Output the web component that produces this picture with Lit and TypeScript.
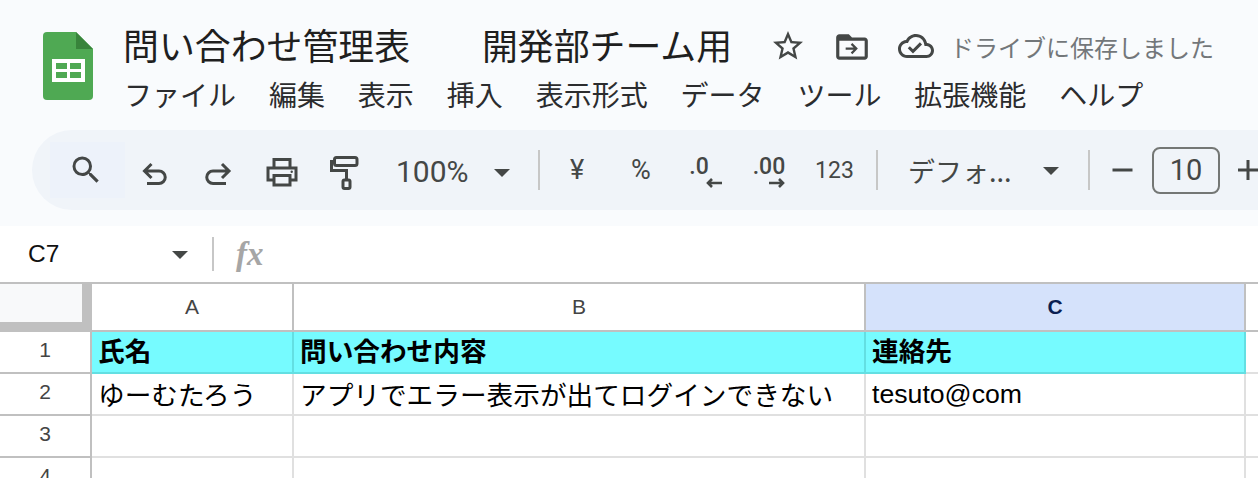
import {css, html, LitElement, svg} from 'lit';
import {customElement} from 'lit/decorators.js';

const MENUS = ['ファイル', '編集', '表示', '挿入', '表示形式', 'データ', 'ツール', '拡張機能', 'ヘルプ'];

const caret = html`<svg class="caret" width="16" height="8" viewBox="0 0 16 8"><path d="M0 0h16L8 8z" fill="#444746"></path></svg>`;

const icon = (d: string, size = 36) => html`<svg width=${size} height=${size} viewBox="0 0 24 24"><path d=${d} fill="#444746"></path></svg>`;

const stroked = (body: unknown) => html`<svg width="36" height="36" viewBox="0 0 36 36" fill="none" stroke="#444746" stroke-width="3">${body}</svg>`;

@customElement('app-root')
export class AppRoot extends LitElement {
  static override styles = css`
      :host {
          display: block;
          width: 1258px;
          height: 478px;
          overflow: hidden;
          background: #fff;
          font-family: "Noto Sans CJK JP", sans-serif;
      }

      svg {
          overflow: visible;
      }

      .header {
          height: 226px;
          box-sizing: border-box;
          background: #f9fbfd;
          overflow: hidden;
      }

      .top {
          display: flex;
          height: 130px;
      }

      .logo {
          margin: 32px 30px 0 43px;
          flex-shrink: 0;
      }

      .titles {
          display: flex;
          flex-direction: column;
      }

      .title-row {
          display: flex;
          align-items: center;
          height: 46px;
          margin-top: 23px;
          white-space: pre;
      }

      .title {
          box-sizing: border-box;
          padding-bottom: 4px;
          font-size: 35.9px;
          line-height: 50px;
          color: #1f1f1f;
          width: 647px;
          flex-shrink: 0;
      }

      .title-row svg {
          flex-shrink: 0;
      }

      .folder {
          display: flex;
          margin: 2px 27px 0 27px;
      }

      .saved {
          margin: 1px 0 0 16px;
          font-size: 24px;
          color: #73777a;
      }

      .menu {
          display: flex;
          gap: 32.9px;
          margin: 0 0 0 1px;
          font-size: 28px;
          line-height: 50px;
          color: #2b2c2e;
          white-space: nowrap;
      }

      .toolbar {
          display: flex;
          align-items: center;
          height: 80px;
          margin-left: 32px;
          padding-left: 18px;
          border-radius: 40px 0 0 40px;
          background: #f0f4f9;
          color: #444746;
          white-space: nowrap;
      }

      .toolbar .caret {
          margin-top: 2px;
      }

      .slot {
          display: flex;
          align-items: center;
          justify-content: center;
          flex-shrink: 0;
          height: 56px;
      }

      .search {
          width: 75px;
          box-sizing: border-box;
          padding-right: 3px;
          background: #edf2fa;
      }

      .w62 { width: 62px; }
      .w64 { width: 64px; }

      .raise {
          padding-top: 6px;
          box-sizing: border-box;
      }

      .zoom {
          width: 147px;
          box-sizing: border-box;
          padding: 3px 0 0 21px;
          justify-content: flex-start;
          font-family: Roboto, sans-serif;
          font-size: 30px;
      }

      .zoom .caret {
          margin-left: 25px;
      }

      .sym {
          font-family: Roboto, sans-serif;
          font-size: 27px;
      }

      .num {
          width: 66px;
          box-sizing: border-box;
          padding-left: 1px;
          font-family: Roboto, sans-serif;
          font-size: 23px;
      }

      .dec {
          flex-direction: column;
          align-items: center;
          box-sizing: border-box;
          padding-top: 5px;
          font-family: Roboto, sans-serif;
          font-size: 23px;
          font-weight: 500;
          line-height: 20px;
      }

      .dec span {
          margin-right: 12px;
      }

      .dec svg {
          display: block;
          margin: 1px 0 0 18px;
      }

      .dec.more span {
          margin-right: 0;
      }

      .dec.more svg {
          margin-left: 16px;
      }

      .sep {
          width: 2px;
          height: 40px;
          background: #c7c7c7;
          flex-shrink: 0;
      }

      .sep.a { margin: 0 5px 0 16px; }
      .sep.b { margin: 0 0 0 9px; }

      .font {
          width: 210px;
          box-sizing: border-box;
          padding-left: 30px;
          justify-content: flex-start;
          font-size: 27px;
      }

      .font span {
          width: 135px;
      }

      .minus {
          width: 62px;
      }

      .size {
          display: flex;
          align-items: center;
          justify-content: center;
          width: 68px;
          height: 47px;
          box-sizing: border-box;
          flex-shrink: 0;
          border: 2px solid #747775;
          border-radius: 8px;
          font-family: Roboto, sans-serif;
          font-size: 29px;
      }

      .plus {
          width: 54px;
      }

      .formula {
          display: flex;
          align-items: center;
          height: 56px;
          background: #fff;
      }

      .ref {
          width: 144px;
          margin-left: 28px;
          font-family: "Liberation Sans", sans-serif;
          font-size: 24.5px;
          color: #111;
      }

      .formula .caret {
          margin-top: 1px;
      }

      .formula .sep {
          height: 34px;
          margin: 0 22px 0 24px;
      }

      .fx {
          font-family: "Liberation Serif", serif;
          font-style: italic;
          font-weight: 700;
          font-size: 33px;
          color: #a6a6a6;
      }

      .grid {
          display: grid;
          grid-template-columns: 92px 202px 572px 380px 12px;
          grid-template-rows: 48px repeat(4, 42px);
          border-top: 2px solid #c0c0c0;
          font-family: "Liberation Sans", "Noto Sans CJK JP", sans-serif;
      }

      .cell {
          display: flex;
          align-items: center;
          box-sizing: border-box;
          padding: 0 0 2px 6px;
          border-right: 2px solid #e0e0e0;
          border-bottom: 2px solid #e0e0e0;
          font-size: 26.67px;
          color: #000;
          white-space: nowrap;
          overflow: hidden;
      }

      .cell.email {
          padding-bottom: 0;
      }

      .corner {
          box-sizing: border-box;
          background: #f8f9fa;
          border-right: 10px solid #c0c0c0;
          border-bottom: 10px solid #c0c0c0;
      }

      .col, .row {
          justify-content: center;
          font-size: 21px;
          color: #444;
          border-color: #c0c0c0;
      }

      .col {
          padding: 0;
          background: #fff;
      }

      .col.sel {
          background: #d5e2fb;
          font-weight: 700;
          color: #0b1f52;
      }

      .tail {
          border-right: 0;
          border-bottom-color: #c0c0c0;
      }

      .row {
          padding: 0 0 4px;
          background: #fff;
          border-bottom-color: #c0c0c0;
      }

      .head {
          padding-bottom: 5px;
          background: #76fbff;
          font-weight: 700;
          border-color: #63dfe2;
      }

      .tail.plain {
          border-bottom-color: #e0e0e0;
      }
  `;

  private _logo() {
    return html`<svg class="logo" width="50" height="68" viewBox="0 0 50 68">
      <path d="M4 0h29l17 17v47a4 4 0 0 1-4 4H4a4 4 0 0 1-4-4V4a4 4 0 0 1 4-4z" fill="#4fa953"></path>
      <path d="M33 0l17 17H33z" fill="#38843b"></path>
      <path d="M9 27h33v23H9z" fill="#fff"></path>
      <path d="M13 31h11v6H13zM27 31h11v6H27zM13 40h11v6H13zM27 40h11v6H27z" fill="#4fa953"></path>
    </svg>`;
  }

  private _toolbar() {
    return html`
      <div class="toolbar">
        <div class="slot search">${icon('M15.5 14h-.79l-.28-.27A6.471 6.471 0 0 0 16 9.5 6.5 6.5 0 1 0 9.5 16c1.61 0 3.09-.59 4.23-1.57l.27.28v.79l5 4.99L20.49 19l-4.99-5zm-6 0C7.01 14 5 11.99 5 9.5S7.01 5 9.5 5 14 7.01 14 9.5 11.99 14 9.5 14z')}</div>
        <div class="slot w62 raise">${stroked(svg`<path d="M13.5 9L6.5 16l7 7M6.5 16H21a6.2 6.2 0 0 1 0 12.5H9"></path>`)}</div>
        <div class="slot w62 raise">${stroked(svg`<path d="M22 9l7 7-7 7M29 16H13a6.2 6.2 0 0 0 0 12.5h13"></path>`)}</div>
        <div class="slot w64">${stroked(svg`<path d="M11 15V7.5h16V15M11 28H5V16h28v12h-6M11 23.500h16V33H11z"></path><circle cx="28.700" cy="19.700" r="1.200" fill="#444746" stroke="none"></circle>`)}</div>
        <div class="slot w62">${stroked(svg`<rect x="8.500" y="5.500" width="22.500" height="8" rx="2"></rect><path d="M8.500 9.500h-3v9h15v9.500"></path><rect x="17" y="28" width="7" height="8.500" rx="1.500"></rect>`)}</div>
        <div class="slot zoom">100%${caret}</div>
        <div class="sep a"></div>
        <div class="slot w64 sym">¥</div>
        <div class="slot w64 sym">%</div>
        <div class="slot w64 dec"><span>.0</span>
          <svg width="16" height="10" viewBox="0 0 16 10" fill="none" stroke="#444746" stroke-width="2.600"><path d="M16 5H2M6 1L2 5l4 4"></path></svg>
        </div>
        <div class="slot w64 dec more"><span>.00</span>
          <svg width="16" height="10" viewBox="0 0 16 10" fill="none" stroke="#444746" stroke-width="2.600"><path d="M0 5h14M10 1l4 4-4 4"></path></svg>
        </div>
        <div class="slot num">123</div>
        <div class="sep b"></div>
        <div class="slot font"><span>デフォ...</span>${caret}</div>
        <div class="sep"></div>
        <div class="slot minus">${stroked(svg`<path d="M9.500 18h20"></path>`)}</div>
        <div class="size">10</div>
        <div class="slot plus">${stroked(svg`<path d="M9 18h20M19 8v20"></path>`)}</div>
      </div>
    `;
  }

  override render() {
    return html`
      <div class="header">
        <div class="top">
          ${this._logo()}
          <div class="titles">
            <div class="title-row">
              <div class="title">問い合わせ管理表　　開発部チーム用</div>
              ${icon('M22 9.24l-7.19-.62L12 2 9.19 8.63 2 9.24l5.46 4.73L5.82 21 12 17.27 18.18 21l-1.630-7.030L22 9.24zM12 15.4l-3.760 2.270 1-4.280-3.320-2.880 4.380-.380L12 6.100l1.710 4.040 4.380.380-3.320 2.880 1 4.280L12 15.400z')}
              <span class="folder">${icon('M20 6h-8l-2-2H4c-1.100 0-2 .9-2 2v12c0 1.100.9 2 2 2h16c1.100 0 2-.9 2-2V8c0-1.100-.9-2-2-2zm0 12H4V8h16v10zM12.200 9.500l-1 1 1.800 1.800H8v1.400h5l-1.800 1.800 1 1 3.500-3.500z', 38)}</span>
              ${icon('M19.350 10.040C18.670 6.590 15.640 4 12 4 9.110 4 6.600 5.640 5.350 8.040 2.340 8.360 0 10.910 0 14c0 3.310 2.690 6 6 6h13c2.760 0 5-2.240 5-5 0-2.640-2.050-4.780-4.650-4.960zM19 18H6c-2.210 0-4-1.790-4-4 0-2.050 1.530-3.760 3.560-3.970l1.070-.11.5-.95C8.080 7.140 9.940 6 12 6c2.620 0 4.880 1.860 5.390 4.430l.3 1.500 1.530.11c1.560.1 2.780 1.410 2.780 2.960 0 1.650-1.350 3-3 3zm-9-3.820l-2.090-2.090L6.500 13.500 10 17l6.010-6.010-1.410-1.410z')}
              <span class="saved">ドライブに保存しました</span>
            </div>
            <div class="menu">${MENUS.map((m) => html`<span>${m}</span>`)}</div>
          </div>
        </div>
        ${this._toolbar()}
      </div>
      <div class="formula">
        <div class="ref">C7</div>
        ${caret}
        <div class="sep"></div>
        <div class="fx">fx</div>
      </div>
      <div class="grid">
        <div class="corner"></div>
        <div class="cell col">A</div>
        <div class="cell col">B</div>
        <div class="cell col sel">C</div>
        <div class="cell tail"></div>

        <div class="cell row">1</div>
        <div class="cell head">氏名</div>
        <div class="cell head">問い合わせ内容</div>
        <div class="cell head">連絡先</div>
        <div class="cell tail plain"></div>

        <div class="cell row">2</div>
        <div class="cell">ゆーむたろう</div>
        <div class="cell">アプリでエラー表示が出てログインできない</div>
        <div class="cell email">tesuto@com</div>
        <div class="cell tail plain"></div>

        <div class="cell row">3</div>
        <div class="cell"></div>
        <div class="cell"></div>
        <div class="cell"></div>
        <div class="cell tail plain"></div>

        <div class="cell row">4</div>
        <div class="cell"></div>
        <div class="cell"></div>
        <div class="cell"></div>
        <div class="cell tail plain"></div>
      </div>
    `;
  }
}

declare global {
  interface HTMLElementTagNameMap {
    'app-root': AppRoot;
  }
}
